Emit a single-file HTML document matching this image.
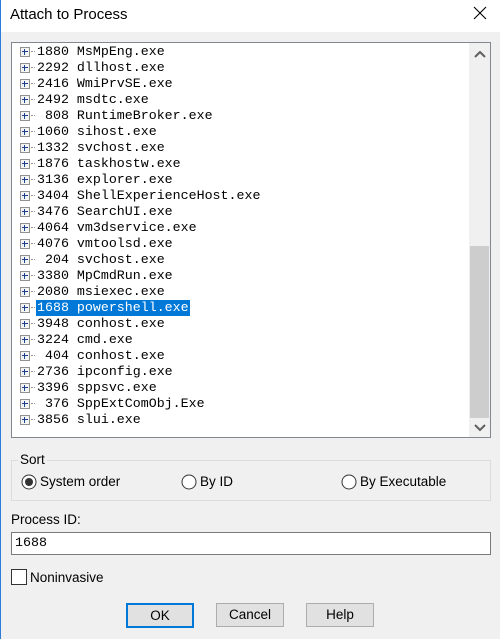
<!DOCTYPE html><html><head><style>
body{margin:0;width:500px;height:639px;background:#f0f0f0;position:relative;overflow:hidden;font-family:"Liberation Sans",sans-serif;font-size:13px;color:#000}
.a{position:absolute}
#tb{left:0;top:0;width:500px;height:32px;background:#fff}
#lb{left:0;top:0;width:1px;height:639px;background:#2b7bd8}
#list{left:11px;top:42px;width:478px;height:394px;border:1px solid #828790;background:#fff}
.r{position:absolute;left:0;height:16px;font-family:"Liberation Mono",monospace;font-size:13.3px;line-height:16px;white-space:pre}
.p{position:absolute;left:8px;top:3px;width:8px;height:8px;border:1px solid #919191;background:#f4f4f4}
.p:before{content:"";position:absolute;left:1px;top:3px;width:6px;height:1px;background:#1a3c8c}
.p:after{content:"";position:absolute;left:3px;top:1px;width:1px;height:6px;background:#1a3c8c}
.d{position:absolute;left:19px;top:7px;width:4px;border-top:1px dotted #999}
.t{position:absolute;left:24px;top:0;padding:0 1px}
.sel{background:#0078d7;color:#fff}
.btn{position:absolute;top:603px;width:66px;height:22px;border:1px solid #adadad;background:#e1e1e1;text-align:center;line-height:22px;font-size:13.5px}
.l{font-size:13.5px}
</style></head><body>
<div id="tb" class="a"></div><div id="lb" class="a"></div>
<div class="a" style="left:10px;top:6px;font-size:15px">Attach to Process</div>
<svg class="a" style="left:473px;top:6px" width="14" height="14"><path d="M1 1L13 13M13 1L1 13" stroke="#000" stroke-width="1.1"/></svg>
<div id="list" class="a">
<div id="rows"></div>
<div class="a" style="left:457px;top:0;width:21px;height:394px;background:#f0f0f0"></div>
<div class="a" style="left:458px;top:203px;width:19px;height:172px;background:#cdcdcd"></div>
<svg class="a" style="left:462px;top:8px" width="12" height="8"><path d="M1 6L6 1L11 6" stroke="#606060" stroke-width="2" fill="none"/></svg>
<svg class="a" style="left:462px;top:381px" width="12" height="8"><path d="M1 1L6 6L11 1" stroke="#606060" stroke-width="2" fill="none"/></svg>
</div>
<script>
var d=["1880 MsMpEng.exe","2292 dllhost.exe","2416 WmiPrvSE.exe","2492 msdtc.exe"," 808 RuntimeBroker.exe","1060 sihost.exe","1332 svchost.exe","1876 taskhostw.exe","3136 explorer.exe","3404 ShellExperienceHost.exe","3476 SearchUI.exe","4064 vm3dservice.exe","4076 vmtoolsd.exe"," 204 svchost.exe","3380 MpCmdRun.exe","2080 msiexec.exe","1688 powershell.exe","3948 conhost.exe","3224 cmd.exe"," 404 conhost.exe","2736 ipconfig.exe","3396 sppsvc.exe"," 376 SppExtComObj.Exe","3856 slui.exe"];
var h="";d.forEach(function(s,i){h+='<div class="r" style="top:'+(1+i*16)+'px"><div class="p"></div><div class="d"></div><span class="t'+(i==16?' sel':'')+'">'+s+'</span></div>'});
document.getElementById("rows").innerHTML=h;
</script>
<div class="a" style="left:11px;top:460px;width:478px;height:39px;border:1px solid #dcdcdc"></div>
<div class="a l" style="left:18px;top:452px;background:#f0f0f0;padding:0 2px">Sort</div>
<svg class="a" style="left:21px;top:474px" width="16" height="16"><circle cx="8" cy="8" r="7" fill="#fff" stroke="#333"/><circle cx="8" cy="8" r="4" fill="#333"/></svg>
<div class="a l" style="left:40px;top:474px">System order</div>
<svg class="a" style="left:181px;top:474px" width="16" height="16"><circle cx="8" cy="8" r="7" fill="#fff" stroke="#333"/></svg>
<div class="a l" style="left:200px;top:474px">By ID</div>
<svg class="a" style="left:341px;top:474px" width="16" height="16"><circle cx="8" cy="8" r="7" fill="#fff" stroke="#333"/></svg>
<div class="a l" style="left:360px;top:474px">By Executable</div>
<div class="a l" style="left:11px;top:512px">Process ID:</div>
<div class="a" style="left:11px;top:532px;width:478px;height:21px;border:1px solid #7a7a7a;background:#fff;font-family:'Liberation Mono',monospace;font-size:13.3px;line-height:20px;text-indent:3px">1688</div>
<div class="a" style="left:11px;top:569px;width:14px;height:14px;border:1px solid #333;background:#fff"></div>
<div class="a l" style="left:30px;top:570px">Noninvasive</div>
<div class="btn" style="left:126px;border:2px solid #0078d7;width:64px;height:21px;top:603px">OK</div>
<div class="btn" style="left:216px">Cancel</div>
<div class="btn" style="left:306px">Help</div>
</body></html>
